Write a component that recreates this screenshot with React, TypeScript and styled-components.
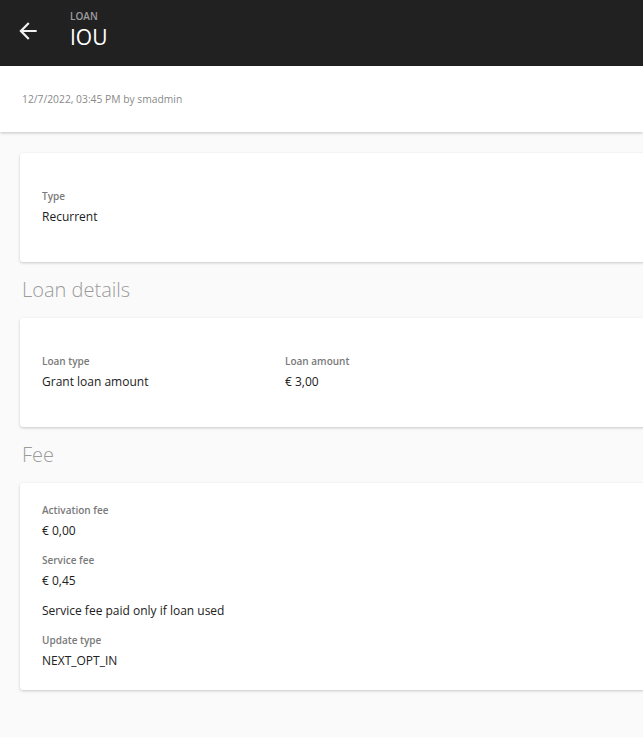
import styled, { createGlobalStyle } from "styled-components";

const GlobalStyle = createGlobalStyle`
  html, body {
    margin: 0;
    padding: 0;
    background: #fafafa;
    overflow-x: hidden;
  }
  body {
    font-family: "Open Sans", "Noto Sans", sans-serif;
    color: #212121;
  }
`;

const Page = styled.div`
  min-height: 737px;
  background: #fafafa;
  overflow: hidden;
`;

const TopBar = styled.header`
  display: flex;
  align-items: center;
  height: 66px;
  background: #212121;
  padding-left: 15px;
  box-sizing: border-box;
`;

const BackButton = styled.button`
  display: flex;
  align-items: center;
  justify-content: center;
  width: 26px;
  height: 26px;
  padding: 0;
  margin-top: -4px;
  border: none;
  background: none;
  color: #f2f2f2;
  cursor: pointer;
`;

const TitleBlock = styled.div`
  display: flex;
  flex-direction: column;
  margin-left: 29px;
  margin-top: -6px;
`;

const Kicker = styled.span`
  font-size: 10px;
  line-height: 12px;
  font-weight: 600;
  color: #9e9e9e;
`;

const Title = styled.h1`
  margin: 2px 0 0;
  font-size: 21px;
  line-height: 26px;
  font-weight: 500;
  color: #ffffff;
`;

const MetaBar = styled.div`
  display: flex;
  align-items: center;
  height: 66px;
  padding-left: 22px;
  background: #ffffff;
  box-shadow: 0 1px 3px rgba(0, 0, 0, 0.22);
  font-size: 10.3px;
  color: #8a8a8a;
`;

const Content = styled.main`
  width: 720px;
  padding: 21px 0 40px 20px;
`;

const Card = styled.section<{ $pad: number }>`
  background: #ffffff;
  border-radius: 3px;
  box-shadow: 0 1px 3px rgba(0, 0, 0, 0.2);
  padding: ${(p) => p.$pad}px 22px ${(p) => p.$pad + 1}px;
`;

const Row = styled.div`
  display: grid;
  grid-template-columns: 243px 1fr;
`;

const Stack = styled.div`
  display: flex;
  flex-direction: column;
  gap: 12px;
`;

const Field = styled.div`
  display: flex;
  flex-direction: column;
  gap: 4px;
`;

const Label = styled.span`
  font-size: 10px;
  line-height: 16px;
  font-weight: 600;
  color: #7a7a7a;
`;

const Value = styled.span`
  font-size: 12px;
  line-height: 18px;
  color: #212121;
`;

const SectionTitle = styled.h2`
  margin: 14px 0 14px 2px;
  font-size: 20px;
  line-height: 28px;
  font-weight: 300;
  color: #9a9a9a;
`;

const ArrowBack = () => (
  <svg width="26" height="26" viewBox="0 0 24 24" fill="currentColor">
    <path d="M20 11H7.83l5.59-5.59L12 4l-8 8 8 8 1.41-1.41L7.83 13H20v-2z" />
  </svg>
);

export default function App() {
  return (
    <Page>
      <GlobalStyle />
      <TopBar>
        <BackButton aria-label="Back">
          <ArrowBack />
        </BackButton>
        <TitleBlock>
          <Kicker>LOAN</Kicker>
          <Title>IOU</Title>
        </TitleBlock>
      </TopBar>
      <MetaBar>12/7/2022, 03:45 PM by smadmin</MetaBar>
      <Content>
        <Card $pad={35}>
          <Field>
            <Label>Type</Label>
            <Value>Recurrent</Value>
          </Field>
        </Card>

        <SectionTitle>Loan details</SectionTitle>
        <Card $pad={35}>
          <Row>
            <Field>
              <Label>Loan type</Label>
              <Value>Grant loan amount</Value>
            </Field>
            <Field>
              <Label>Loan amount</Label>
              <Value>€ 3,00</Value>
            </Field>
          </Row>
        </Card>

        <SectionTitle>Fee</SectionTitle>
        <Card $pad={19}>
          <Stack>
            <Field>
              <Label>Activation fee</Label>
              <Value>€ 0,00</Value>
            </Field>
            <Field>
              <Label>Service fee</Label>
              <Value>€ 0,45</Value>
            </Field>
            <Value>Service fee paid only if loan used</Value>
            <Field>
              <Label>Update type</Label>
              <Value>NEXT_OPT_IN</Value>
            </Field>
          </Stack>
        </Card>
      </Content>
    </Page>
  );
}
